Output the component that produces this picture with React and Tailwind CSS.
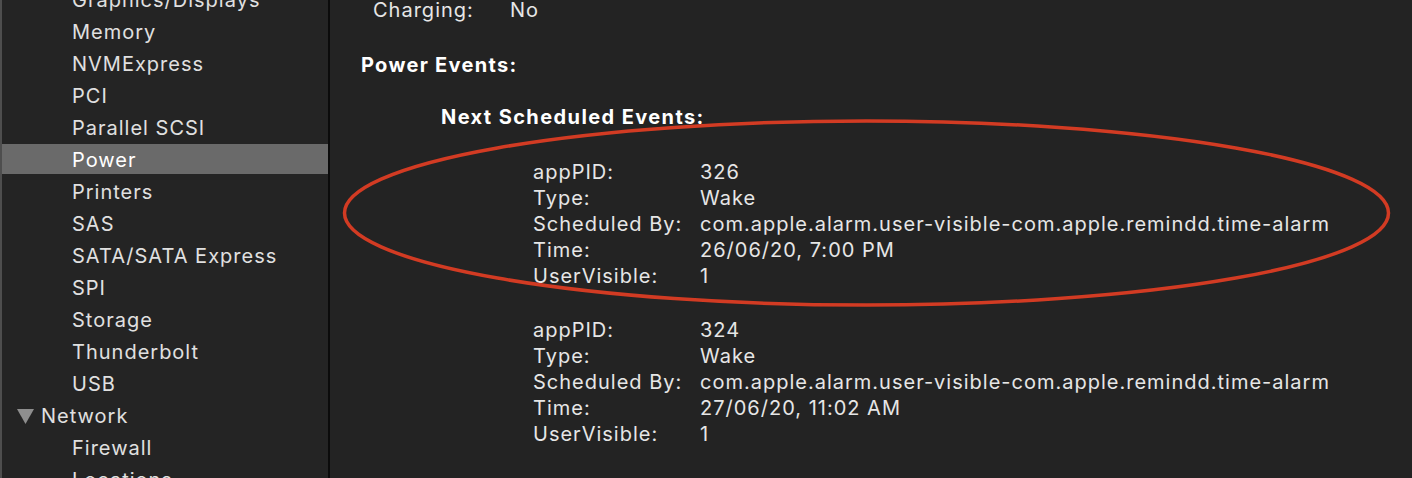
import React from 'react';

const sidebarItems = [
  { name: 'Graphics/Displays' },
  { name: 'Memory' },
  { name: 'NVMExpress' },
  { name: 'PCI' },
  { name: 'Parallel SCSI' },
  { name: 'Power', selected: true },
  { name: 'Printers' },
  { name: 'SAS' },
  { name: 'SATA/SATA Express' },
  { name: 'SPI' },
  { name: 'Storage' },
  { name: 'Thunderbolt' },
  { name: 'USB' },
  { name: 'Network', group: true },
  { name: 'Firewall' },
  { name: 'Locations' },
];

const events = [
  {
    appPID: '326',
    type: 'Wake',
    scheduledBy: 'com.apple.alarm.user-visible-com.apple.remindd.time-alarm',
    time: '26/06/20, 7:00 PM',
    userVisible: '1',
  },
  {
    appPID: '324',
    type: 'Wake',
    scheduledBy: 'com.apple.alarm.user-visible-com.apple.remindd.time-alarm',
    time: '27/06/20, 11:02 AM',
    userVisible: '1',
  },
];

function EventBlock({ event, className }) {
  const rows = [
    ['appPID:', event.appPID],
    ['Type:', event.type],
    ['Scheduled By:', event.scheduledBy],
    ['Time:', event.time],
    ['UserVisible:', event.userVisible],
  ];
  return (
    <div className={`pl-[203px] ${className}`}>
      {rows.map(([label, value]) => (
        <div key={label} className="flex h-[26px] items-center whitespace-nowrap">
          <span className="w-[167px] shrink-0">{label}</span>
          <span>{value}</span>
        </div>
      ))}
    </div>
  );
}

export default function App() {
  return (
    <div
      className="flex h-[478px] w-[1412px] overflow-hidden bg-[#232323] text-[20px] tracking-[1px] text-[#e6e6e6]"
      style={{ fontFamily: 'Inter, "Liberation Sans", sans-serif' }}
    >
      {/* Sidebar */}
      <div className="w-[328px] shrink-0 overflow-hidden border-l-2 border-[#4e4e4e] bg-[#242424]">
        <div className="mt-[-16px]">
          {sidebarItems.map((item) => (
            <div key={item.name} className="h-8">
              <div
                className={`flex h-[30px] items-center whitespace-nowrap pt-[2px] ${
                  item.group ? 'pl-[15px]' : 'pl-[70px]'
                } ${item.selected ? 'bg-[#6a6a6a] text-white' : 'text-[#e0e0e0]'}`}
              >
                {item.group && (
                  <svg width="17" height="15" viewBox="0 0 17 15" className="mr-[7px]">
                    <polygon points="0,0 17,0 8.5,15" fill="#8e8e8e" />
                  </svg>
                )}
                {item.name}
              </div>
            </div>
          ))}
        </div>
      </div>

      {/* Divider */}
      <div className="w-[2px] shrink-0 bg-[#0b0b0b]" />

      {/* Content */}
      <div className="relative flex-1 overflow-hidden">
        <div className="mt-[-3px]">
          <div className="flex h-[26px] items-center pl-[43px]">
            <span className="w-[137px]">Charging:</span>
            <span>No</span>
          </div>
          <div className="mt-[29px] flex h-[26px] items-center pl-[31px] font-bold tracking-[1.3px] text-white">
            Power Events:
          </div>
          <div className="mt-[26px] flex h-[26px] items-center pl-[111px] font-bold tracking-[1.4px] text-white">
            Next Scheduled Events:
          </div>
          <EventBlock event={events[0]} className="mt-[29px]" />
          <EventBlock event={events[1]} className="mt-[28px]" />
        </div>

        {/* Red annotation ellipse */}
        <svg
          className="pointer-events-none absolute left-0 top-0"
          width="1082"
          height="478"
          viewBox="0 0 1082 478"
        >
          <ellipse cx="536.5" cy="213" rx="522" ry="92" fill="none" stroke="#d23b23" strokeWidth="3.5" />
        </svg>
      </div>
    </div>
  );
}
